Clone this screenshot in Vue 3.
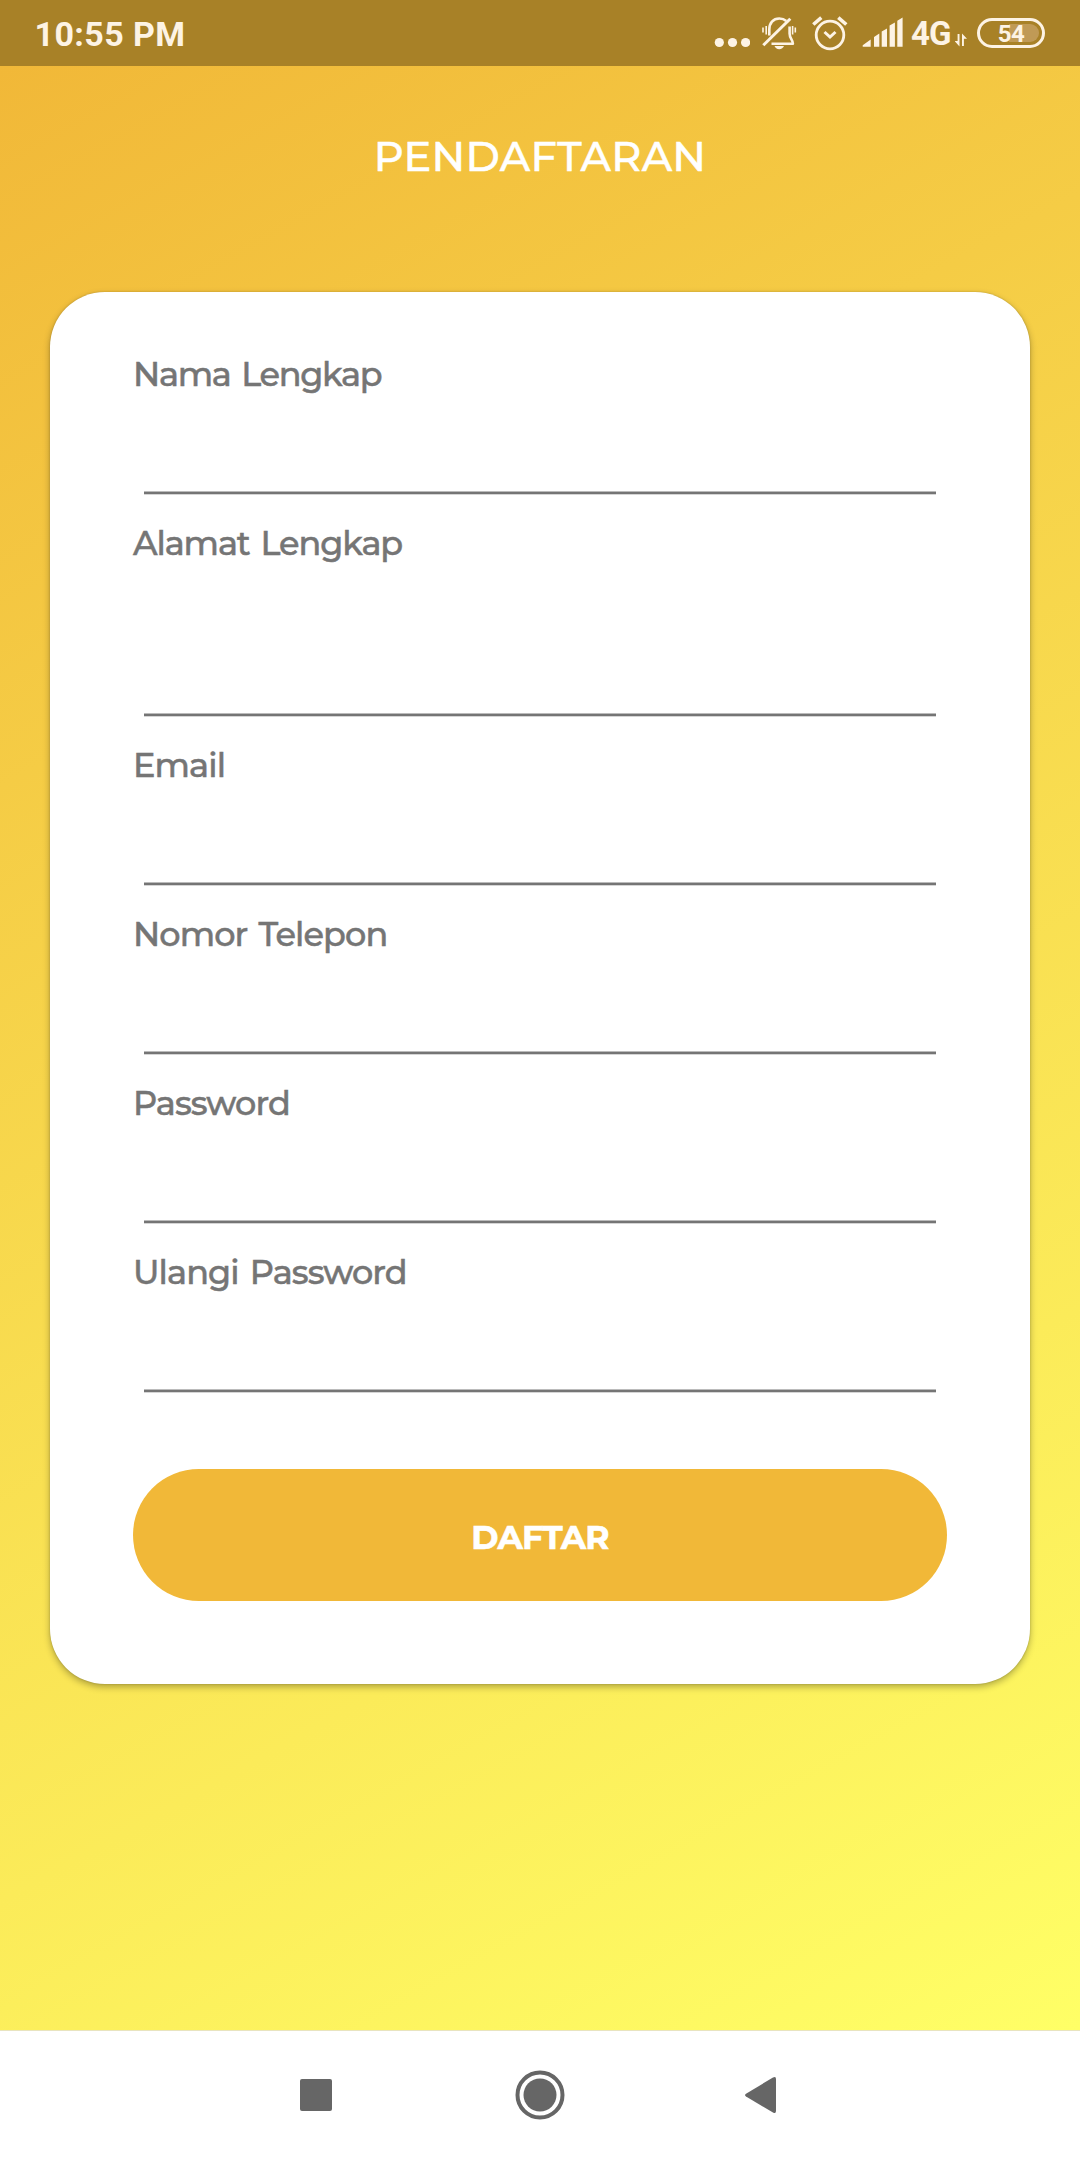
<template>
  <div class="screen">
    <header class="status-bar">
      <span class="clock">10:55 PM</span>
      <div class="status-icons">
        <svg class="dots" width="36" height="66" viewBox="714 0 36 66">
          <circle cx="719.3" cy="42.5" r="4.6" />
          <circle cx="732.5" cy="42.5" r="4.6" />
          <circle cx="745.6" cy="42.5" r="4.6" />
        </svg>
        <svg class="bell" width="36" height="66" viewBox="761 0 36 66">
          <g fill="none" stroke="#fdf3e4" stroke-width="2.6">
            <path d="M769.300 35.500V29.500c0-6.500 3.800-11 10-11 3 0 5.200.9 7 2.500" />
            <path d="M789.600 26.500V33.500c0 5 3.300 6 3.300 10.300H771.500" stroke-linejoin="round" />
            <path d="M763.300 45.300L790.300 18.800" stroke-width="3" />
            <path d="M763 27.500v5M766.200 26v8.500M792.600 26v8.500M795.300 27.500v5" stroke-width="1.600" />
          </g>
          <path d="M774.500 46h9.500c-.8 2-2.500 3.200-4.800 3.200s-4-1.200-4.700-3.200z" />
        </svg>
        <svg class="alarm" width="36" height="66" viewBox="812 0 36 66">
          <g fill="none" stroke="#fdf3e4" stroke-width="2.800">
            <circle cx="830" cy="35" r="13.800" />
            <path d="M824.500 32l5.500 5 5.500-5" stroke-width="3" />
            <path d="M813.300 24.500l8-6.800M846.300 24.500l-8-6.800" stroke-width="3.600" />
          </g>
        </svg>
        <svg class="signal" width="41" height="66" viewBox="862 0 41 66">
          <path d="M862.700 46.700v-1.500l8-5.700v7.200zM874 46.700V37l5.300-3.500v13.200zM881.700 46.700V31.500l5.300-3v18.200zM889.600 46.700V25.500l5.300-3v24.200zM897.300 46.700V20.800l5.300-3.200v29.100z" />
        </svg>
        <span class="network">4G</span>
        <svg class="data" width="13" height="66" viewBox="955 0 13 66">
          <path d="M957.600 34h1.900v12.500L954.500 41h3.100zM962 46V33.500l5 5.300h-3.100V46z" />
        </svg>
        <div class="battery"><span>54</span></div>
      </div>
    </header>

    <main class="content">
      <h1 class="title">PENDAFTARAN</h1>

      <form class="card" @submit.prevent>
        <div v-for="field in fields" :key="field.id" class="field" :class="field.id">
          <label :for="field.id">{{ field.label }}</label>
          <textarea v-if="field.multiline" :id="field.id" v-model="form[field.id]"></textarea>
          <input v-else :id="field.id" v-model="form[field.id]" :type="field.type" />
        </div>
        <button class="submit" type="submit">DAFTAR</button>
      </form>
    </main>

    <nav class="nav-bar">
      <svg class="recent" width="32" height="50" viewBox="0 0 32 50">
        <rect y="9" width="32" height="32" rx="2" />
      </svg>
      <svg class="home" width="50" height="50" viewBox="0 0 50 50">
        <circle cx="25" cy="25" r="22.500" fill="none" stroke="#666" stroke-width="4" />
        <circle cx="25" cy="25" r="16.500" />
      </svg>
      <svg class="back" width="32" height="50" viewBox="0 0 32 50">
        <path d="M1 23.700L28 7.500Q31 6 31 9v32q0 3-3 1.500L1 26.500q-2-1.400 0-2.800z" />
      </svg>
    </nav>
  </div>
</template>

<script setup>
import { reactive } from 'vue'

const fields = [
  { id: 'nama', label: 'Nama Lengkap', type: 'text' },
  { id: 'alamat', label: 'Alamat Lengkap', multiline: true },
  { id: 'email', label: 'Email', type: 'email' },
  { id: 'telepon', label: 'Nomor Telepon', type: 'tel' },
  { id: 'password', label: 'Password', type: 'password' },
  { id: 'ulangi', label: 'Ulangi Password', type: 'password' }
]

const form = reactive({
  nama: '',
  alamat: '',
  email: '',
  telepon: '',
  password: '',
  ulangi: ''
})
</script>

<style>
body {
  margin: 0;
}
</style>

<style scoped>
.screen {
  width: 1080px;
  height: 2160px;
  display: flex;
  flex-direction: column;
  overflow: hidden;
  font-family: Montserrat, Inter, sans-serif;
}

.status-bar {
  height: 66px;
  flex: none;
  box-sizing: border-box;
  padding: 0 35px 0 34.5px;
  display: flex;
  justify-content: space-between;
  background: #a88127;
  color: #fdf3e4;
  font-family: Roboto, sans-serif;
  font-weight: 700;
}

.clock {
  font-size: 34px;
  line-height: 68px;
  letter-spacing: 0.4px;
}

.status-icons {
  display: flex;
  align-items: center;
  fill: #fdf3e4;
}

.bell {
  margin-left: 11px;
}

.alarm {
  margin-left: 15px;
}

.signal {
  margin-left: 14px;
}

.network {
  width: 39px;
  margin-left: 8px;
  padding-top: 2px;
  font-size: 33px;
  line-height: 66px;
  letter-spacing: -1px;
}

.data {
  margin-left: 5px;
}

.battery {
  width: 68px;
  height: 30px;
  margin-left: 9px;
  box-sizing: border-box;
  border: 3px solid #fdf3e4;
  border-radius: 15px;
  padding: 3px;
}

.battery span {
  display: block;
  height: 18px;
  border-radius: 9px;
  background: linear-gradient(to right, transparent 46%, #c09a56 46%);
  font-size: 24px;
  line-height: 21px;
  letter-spacing: -0.5px;
  text-align: center;
}

.content {
  flex: 1;
  padding: 0 50px;
  background: linear-gradient(151.200deg, #f1b838, #ffff66);
}

.title {
  margin: 0;
  padding: 60px 0 106px;
  color: #fff;
  font-size: 41.500px;
  font-weight: 500;
  line-height: 60px;
  letter-spacing: 0.3px;
  text-align: center;
  -webkit-text-stroke: 0.5px currentColor;
}

.card {
  height: 1392px;
  box-sizing: border-box;
  padding: 61px 83px 83px;
  background: #fff;
  border-radius: 55px;
  box-shadow: 0 3px 7px rgba(0, 0, 0, 0.3), 0 0 2px rgba(0, 0, 0, 0.2);
}

.field {
  height: 169px;
  display: flex;
  flex-direction: column;
}

.field.alamat {
  height: 222px;
}

label {
  height: 43px;
  color: #757575;
  font-size: 33.500px;
  font-weight: 500;
  line-height: 43px;
  letter-spacing: -0.9px;
  word-spacing: 3px;
  -webkit-text-stroke: 0.5px currentColor;
}

.nama label {
  letter-spacing: -1.3px;
}

.alamat label {
  letter-spacing: -1.1px;
}

input,
textarea {
  height: 99px;
  flex: none;
  box-sizing: border-box;
  margin: 0 11px;
  padding: 0;
  border: none;
  border-radius: 0;
  outline: none;
  resize: none;
  background: linear-gradient(#bbb 1px, #757575 1px, #757575 3px, #d5d5d5 3px) bottom / 100% 4px no-repeat;
  font: inherit;
}

textarea {
  height: 152px;
}

.submit {
  display: block;
  width: 814px;
  height: 132px;
  margin-top: 49px;
  padding: 3px 0 0;
  border: none;
  border-radius: 66px;
  background: #f1b838;
  color: #fff;
  font-family: inherit;
  font-size: 33px;
  font-weight: 700;
  letter-spacing: -0.8px;
  -webkit-text-stroke: 0.6px currentColor;
}

.nav-bar {
  height: 130px;
  flex: none;
  box-sizing: border-box;
  padding: 39px 0 0 300px;
  display: flex;
  background: #fff;
  border-top: 1px solid #e8e4c0;
  fill: #666;
}

.home {
  margin-left: 183px;
}

.back {
  margin-left: 179.500px;
}
</style>
